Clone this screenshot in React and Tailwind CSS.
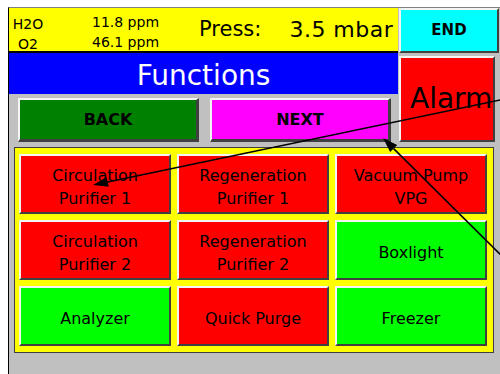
import React from "react";

const cells = [
  { lines: ["Circulation", "Purifier 1"], bg: "bg-[#ff0000]" },
  { lines: ["Regeneration", "Purifier 1"], bg: "bg-[#ff0000]" },
  { lines: ["Vacuum Pump", "VPG"], bg: "bg-[#ff0000]" },
  { lines: ["Circulation", "Purifier 2"], bg: "bg-[#ff0000]" },
  { lines: ["Regeneration", "Purifier 2"], bg: "bg-[#ff0000]" },
  { lines: ["Boxlight"], bg: "bg-[#00ff00]" },
  { lines: ["Analyzer"], bg: "bg-[#00ff00]" },
  { lines: ["Quick Purge"], bg: "bg-[#ff0000]" },
  { lines: ["Freezer"], bg: "bg-[#00ff00]" },
];

const raised =
  "border-2 border-t-[#f4f4f4] border-l-[#f4f4f4] border-r-[#404040] border-b-[#404040]";

function Arrow({ x1, y1, x2, y2 }) {
  // arrowhead drawn at (x2, y2)
  const a = Math.atan2(y2 - y1, x2 - x1);
  const len = 15;
  const half = 5;
  const bx = x2 - len * Math.cos(a);
  const by = y2 - len * Math.sin(a);
  const p1 = `${bx + half * Math.sin(a)},${by - half * Math.cos(a)}`;
  const p2 = `${bx - half * Math.sin(a)},${by + half * Math.cos(a)}`;
  return (
    <g>
      <line x1={x1} y1={y1} x2={bx} y2={by} stroke="#000" strokeWidth="1.6" />
      <polygon points={`${x2},${y2} ${p1} ${p2}`} fill="#000" />
    </g>
  );
}

export default function App() {
  return (
    <div
      className="relative w-[500px] h-[374px] bg-white overflow-hidden pt-[7px] pl-[8px]"
      style={{ fontFamily: '"DejaVu Sans", Verdana, sans-serif' }}
    >
      <div className="h-full bg-[#c0c0c0] border-l border-t border-l-black border-t-[#808080] flex flex-col">
        <div className="flex">
          {/* left column */}
          <div className="w-[389px] flex flex-col">
            <div className="h-[43px] bg-[#ffff00] flex items-start text-black">
              <div className="mt-[6px] w-[38px] text-center text-[14px] leading-[20px]">
                <div>H2O</div>
                <div>O2</div>
              </div>
              <div className="mt-[4px] ml-[45px] text-[14px] leading-[20px]">
                <div>11.8 ppm</div>
                <div>46.1 ppm</div>
              </div>
              <div className="self-center ml-[40px] text-[21px] leading-none">Press:</div>
              <div className="self-center ml-[28px] text-[22px] leading-none tracking-[0.5px]">3.5 mbar</div>
            </div>
            <div className="h-[2px] bg-black" />
            <div className="h-[41px] bg-[#0000ff] flex items-center justify-center pt-[4px] text-white text-[28px] leading-none">
              Functions
            </div>
            <div className="flex mt-[4px] ml-[9px] gap-[11px]">
              <div className={`w-[181px] h-[44px] bg-[#008000] ${raised} border-r-[3px] border-b-[3px] flex items-center justify-center font-bold text-[16px] text-black`}>
                BACK
              </div>
              <div className={`w-[181px] h-[44px] bg-[#ff00ff] ${raised} border-r-[3px] border-b-[3px] flex items-center justify-center font-bold text-[16px] text-black`}>
                NEXT
              </div>
            </div>
          </div>
          {/* right column */}
          <div className="ml-[1px] flex flex-col">
            <div className={`w-[100px] h-[45px] bg-[#00ffff] ${raised} flex items-center justify-center font-bold text-[15px] text-black`}>
              END
            </div>
            <div className={`mt-[3px] w-[96px] h-[86px] bg-[#ff0000] ${raised} flex items-center pl-[9px] text-[28px] leading-none text-black whitespace-nowrap`}>
              Alarm
            </div>
          </div>
        </div>

        {/* function grid */}
        <div className="mt-[5px] ml-[5px] w-[480px] h-[206px] border border-[#404040] bg-[#ffff00] pt-[6px] pl-[4px]">
          <div className="grid grid-cols-[152px_152px_152px] grid-rows-[60px_60px_60px] gap-[6px]">
            {cells.map((c, i) => (
              <div
                key={i}
                className={`${c.bg} ${raised} flex flex-col items-center justify-center pt-[5px] text-[16px] leading-[23px] text-black`}
              >
                {c.lines.map((l, j) => (
                  <div key={j}>{l}</div>
                ))}
              </div>
            ))}
          </div>
        </div>
      </div>

      <svg className="absolute inset-0 pointer-events-none" width="500" height="374">
        <Arrow x1={505} y1={99} x2={93} y2={185} />
        <Arrow x1={512} y1={266} x2={383} y2={138} />
      </svg>
    </div>
  );
}
